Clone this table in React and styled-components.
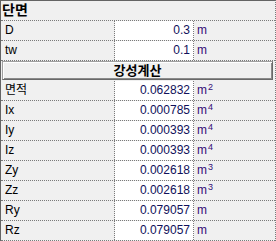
import React from "react"
import styled, { createGlobalStyle } from "styled-components"

const GlobalStyle = createGlobalStyle`
  html, body {
    margin: 0;
    padding: 0;
    background: #f0f0f0;
  }
`

const Grid = styled.div`
  width: 276px;
  box-sizing: border-box;
  background: #f0f0f0;
  border-top: 1px solid #646464;
  border-left: 1px solid #646464;
  border-right: 1px dotted #7a7a7a;
  font-family: "Liberation Sans", "Noto Sans CJK KR", sans-serif;
  font-size: 12px;
  color: #000;
`

const Row = styled.div`
  display: flex;
  height: 19px;
  border-bottom: 1px dotted #7a7a7a;
`

const Title = styled.div`
  height: 19px;
  line-height: 18px;
  padding-left: 1px;
  font-weight: bold;
  font-size: 14px;
  border-bottom: 1px dotted #7a7a7a;
`

const Label = styled.div`
  width: 114px;
  padding-left: 4px;
  box-sizing: border-box;
  line-height: 19px;
  border-right: 1px dotted #7a7a7a;
`

const Value = styled.div`
  width: 79px;
  padding-right: 3px;
  box-sizing: border-box;
  text-align: right;
  line-height: 19px;
  background: #fff;
  color: #10105a;
  border-right: 1px dotted #7a7a7a;
`

const Unit = styled.div`
  flex: 1;
  padding-left: 3px;
  line-height: 19px;
  color: #340c78;
`

const Power = styled.span`
  font-size: 9px;
  position: relative;
  top: -4px;
  margin-left: 1px;
`

const ButtonRow = styled.div`
  height: 20px;
  padding: 0 1px;
  box-sizing: border-box;
`

const CalcButton = styled.button`
  display: block;
  width: 271px;
  height: 19px;
  margin: 0;
  padding: 0;
  box-sizing: border-box;
  background: #f0f0f0;
  border: 1px solid;
  border-color: #a0a0a0 #696969 #696969 #a0a0a0;
  box-shadow: inset 1px 1px #fff, inset -1px -1px #8a8a8a;
  font-family: "Liberation Sans", "Noto Sans CJK KR", sans-serif;
  font-size: 13px;
  font-weight: bold;
  color: #000;
  line-height: 15px;
`

const inputs = [
  { name: "D", value: "0.3" },
  { name: "tw", value: "0.1" },
]

const results = [
  { name: "면적", value: "0.062832", power: 2 },
  { name: "Ix", value: "0.000785", power: 4 },
  { name: "Iy", value: "0.000393", power: 4 },
  { name: "Iz", value: "0.000393", power: 4 },
  { name: "Zy", value: "0.002618", power: 3 },
  { name: "Zz", value: "0.002618", power: 3 },
  { name: "Ry", value: "0.079057" },
  { name: "Rz", value: "0.079057" },
]

function PropRow({ name, value, power }) {
  return (
    <Row>
      <Label>{name}</Label>
      <Value>{value}</Value>
      <Unit>
        m{power && <Power>{power}</Power>}
      </Unit>
    </Row>
  )
}

export default function App() {
  return (
    <>
      <GlobalStyle />
      <Grid>
        <Title>단면</Title>
        {inputs.map(r => (
          <PropRow key={r.name} {...r} />
        ))}
        <ButtonRow>
          <CalcButton>강성계산</CalcButton>
        </ButtonRow>
        {results.map(r => (
          <PropRow key={r.name} {...r} />
        ))}
      </Grid>
    </>
  )
}
